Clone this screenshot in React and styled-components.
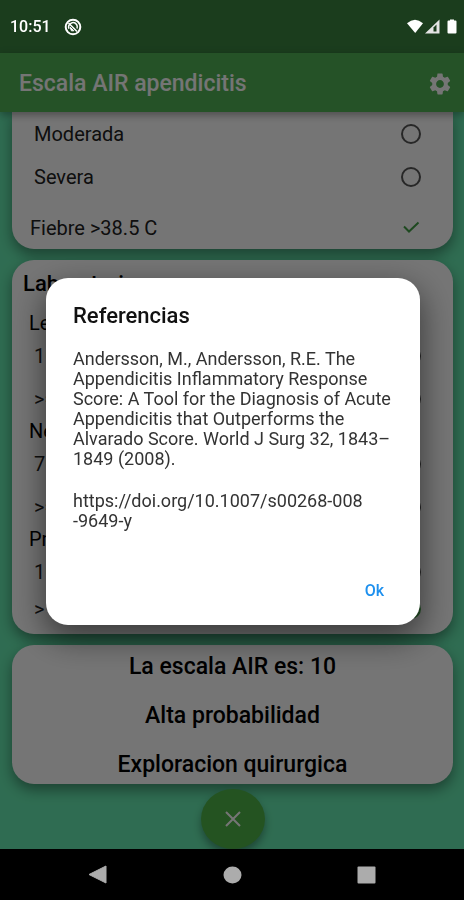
import React from "react";
import styled, { createGlobalStyle } from "styled-components";
import { MdSettings } from "react-icons/md";

const GlobalStyle = createGlobalStyle`
  * { box-sizing: border-box; }
  body { margin: 0; font-family: Roboto, "Liberation Sans", sans-serif; color: #000; }
  h1, h2, p, fieldset, legend { margin: 0; padding: 0; border: 0; }
  button { border: 0; padding: 0; background: none; font-family: inherit; }
`;

const Screen = styled.div`
  display: flex;
  flex-direction: column;
  height: 100vh;
  background: #67ecb2;
`;

const StatusBar = styled.div`
  display: flex;
  align-items: center;
  justify-content: space-between;
  height: 53px;
  flex-shrink: 0;
  padding: 0 7px 0 10px;
  background: #3b8540;
`;

const StatusGroup = styled.div`
  display: flex;
  align-items: center;
  gap: ${(p) => p.$gap}px;
  position: relative;
  z-index: 3;
  color: #fff;
  font-size: 16px;
  font-weight: 500;
  line-height: 20px;
`;

const AppBar = styled.header`
  display: flex;
  align-items: center;
  justify-content: space-between;
  height: 59px;
  flex-shrink: 0;
  padding: 2px 11px 0 19px;
  background: #52b355;
  color: #fff;
  box-shadow: 0 3px 8px rgba(0, 0, 0, 0.35);
  z-index: 1;
`;

const AppTitle = styled.h1`
  font-size: 23px;
  font-weight: 500;
  line-height: 28px;
`;

const IconButton = styled.button`
  display: flex;
  color: inherit;
`;

const Content = styled.main`
  flex: 1;
  min-height: 0;
  overflow: hidden;
  display: flex;
  flex-direction: column;
  padding: 0 11px 0 12px;
`;

const Card = styled.section`
  flex-shrink: 0;
  background: #fff;
  border-radius: ${(p) => (p.$continued ? "0 0 22px 22px" : "22px")};
  margin-bottom: ${(p) => (p.$last ? 5 : 11)}px;
  box-shadow: 0 6px 14px rgba(0, 0, 0, 0.4);
`;

const LabCard = styled(Card)`
  padding: 12px 0 9px;
`;

const ResultCard = styled(Card)`
  display: flex;
  flex-direction: column;
  gap: 25px;
  padding: 10px 12px 7px;
  text-align: center;
  font-size: 23px;
  font-weight: 500;
  line-height: 24px;
`;

const OptionRow = styled.label`
  display: flex;
  align-items: center;
  justify-content: space-between;
  height: ${(p) => (p.$compact ? 32 : 43)}px;
  margin-top: ${(p) => (p.$spaced ? 8 : 0)}px;
  padding: 0 32px 0 ${(p) => (p.$spaced ? 18 : 22)}px;
  color: #222;
  font-size: 20px;
`;

const Radio = styled.input.attrs({ type: "radio" })`
  appearance: none;
  width: 20px;
  height: 20px;
  margin: 0;
  border: 2px solid #555;
  border-radius: 50%;

  &:checked {
    border-color: #4caf50;
    background: radial-gradient(circle, #4caf50 50%, transparent 55%);
  }
`;

const CheckWrap = styled.span`
  display: flex;
  position: relative;
`;

const Checkbox = styled.input.attrs({ type: "checkbox" })`
  appearance: none;
  width: 20px;
  height: 20px;
  margin: 0;
`;

const CheckMark = styled.svg`
  position: absolute;
  inset: 0;
  display: none;
  pointer-events: none;

  ${Checkbox}:checked + & {
    display: block;
  }
`;

const CardHeading = styled.h2`
  padding-left: 11px;
  font-size: 22px;
  font-weight: 500;
  line-height: 24px;
  margin-bottom: 16px;
`;

const GroupLabel = styled.legend`
  padding-left: 17px;
  font-size: 20px;
  line-height: 22px;
`;

const Fab = styled.button`
  display: flex;
  align-items: center;
  justify-content: center;
  align-self: center;
  flex-shrink: 0;
  width: 64px;
  height: 60px;
  border-radius: 50%;
  background: #50b548;
  color: #fff;
  box-shadow: 0 5px 9px rgba(0, 0, 0, 0.35);
`;

const NavBar = styled.nav`
  position: relative;
  z-index: 3;
  display: flex;
  justify-content: center;
  gap: 115px;
  height: 51px;
  flex-shrink: 0;
  background: #000;
  color: #acacac;
`;

const Scrim = styled.div`
  position: fixed;
  inset: 0;
  z-index: 2;
  display: flex;
  align-items: center;
  justify-content: center;
  padding: 3px 44px 0 46px;
  background: rgba(0, 0, 0, 0.54);
`;

const Dialog = styled.div`
  display: flex;
  flex-direction: column;
  width: 100%;
  max-width: 560px;
  padding: 26px 27px 22px;
  border-radius: 22px;
  background: #fff;
  box-shadow: 0 12px 32px 2px rgba(0, 0, 0, 0.5);
`;

const DialogTitle = styled.h2`
  color: #111;
  font-size: 22px;
  font-weight: 500;
  line-height: 24px;
  margin-bottom: 21px;
`;

const Reference = styled.p`
  font-size: 18px;
  line-height: 20px;
  color: #333;
  margin-bottom: 22px;
  white-space: pre-line;
`;

const OkButton = styled.button`
  align-self: flex-end;
  margin: 26px 9px 0 0;
  color: #1e90ee;
  font-size: 16px;
  font-weight: 500;
  line-height: 24px;
`;

const labGroups = [
  { label: "Leucocitos", options: ["10.0-14.9", ">= 15.0"] },
  { label: "Neutrofilos", options: ["70-84%", ">= 85%"] },
  { label: "Proteina C", options: ["10-49 mg/L", "> 50 mg/L"], selected: 1 },
];

function LabGroup({ label, options, selected, last }) {
  return (
    <fieldset>
      <GroupLabel>{label}</GroupLabel>
      {options.map((option, i) => (
        <OptionRow key={option} $compact={last && i === options.length - 1}>
          {option}
          <Radio name={label} defaultChecked={selected === i} />
        </OptionRow>
      ))}
    </fieldset>
  );
}

export default function App() {
  const [open, setOpen] = React.useState(true);
  return (
    <Screen>
      <GlobalStyle />
      <StatusBar>
        <StatusGroup $gap={13}>
          <span>10:51</span>
          <svg width="18" height="18" viewBox="0 0 18 18" fill="none" stroke="#fff" aria-hidden="true">
            <circle cx="9" cy="9" r="7.3" strokeWidth="2" />
            <path d="M5 10.8a4.4 4.4 0 0 1 7.6-4.3q1.2 1.7.4 4" strokeWidth="1.5" />
            <path d="M4.5 5l8.5 8.5" strokeWidth="1.6" />
            <path d="M6.2 9.2l3.6 3.6H7.4z" fill="#fff" strokeWidth="1" />
          </svg>
        </StatusGroup>
        <StatusGroup $gap={0}>
          <svg width="50" height="16" viewBox="0 0 50 16" aria-hidden="true">
            <path d="M0 4.2Q8-2.8 16 4.2L8.2 14Z" fill="#fff" />
            <path d="M18 14.5L32.5.5v14Z" fill="#e4e4e4" />
            <path d="M26.5 12.5V8.5L29.5 5.5V12.5Z" fill="#1b3d1d" />
            <path d="M43 .5h4v1h1.5q1 0 1 1v11q0 1-1 1h-7q-1 0-1-1v-11q0-1 1-1H43Z" fill="#fff" />
          </svg>
        </StatusGroup>
      </StatusBar>
      <AppBar>
        <AppTitle>Escala AIR apendicitis</AppTitle>
        <IconButton aria-label="Ajustes">
          <MdSettings size={26} />
        </IconButton>
      </AppBar>
      <Content>
        <Card $continued>
          <OptionRow>
            Moderada
            <Radio name="rebote" />
          </OptionRow>
          <OptionRow>
            Severa
            <Radio name="rebote" />
          </OptionRow>
          <OptionRow $spaced>
            Fiebre &gt;38.5 C
            <CheckWrap>
              <Checkbox defaultChecked />
              <CheckMark width="20" height="20" viewBox="0 0 20 20" fill="none" stroke="#43a047" strokeWidth="2" aria-hidden="true">
                <path d="M3 8.5L8 13.5L17.5 4.5" />
              </CheckMark>
            </CheckWrap>
          </OptionRow>
        </Card>
        <LabCard>
          <CardHeading>Laboratorio</CardHeading>
          {labGroups.map((group, i) => (
            <LabGroup key={group.label} {...group} last={i === labGroups.length - 1} />
          ))}
        </LabCard>
        <ResultCard $last>
          <p>La escala AIR es: 10</p>
          <p>Alta probabilidad</p>
          <p>Exploracion quirurgica</p>
        </ResultCard>
        <Fab aria-label="Cerrar">
          <svg width="18" height="18" viewBox="0 0 18 18" stroke="currentColor" strokeWidth="2" aria-hidden="true">
            <path d="M2 2L16 16M16 2L2 16" />
          </svg>
        </Fab>
      </Content>
      <NavBar>
        <IconButton aria-label="Atrás">
          <svg width="19" height="51" viewBox="0 0 19 51" fill="currentColor" aria-hidden="true">
            <path d="M0 25.5L17 17v17Z" stroke="currentColor" strokeLinejoin="round" />
          </svg>
        </IconButton>
        <IconButton aria-label="Inicio">
          <svg width="19" height="51" viewBox="0 0 19 51" fill="currentColor" aria-hidden="true">
            <ellipse cx="9.5" cy="26" rx="9" ry="8.5" />
          </svg>
        </IconButton>
        <IconButton aria-label="Recientes">
          <svg width="19" height="51" viewBox="0 0 19 51" fill="currentColor" aria-hidden="true">
            <rect x="0.5" y="17.5" width="18" height="17" rx="1" />
          </svg>
        </IconButton>
      </NavBar>
      {open && (
        <Scrim>
          <Dialog role="dialog" aria-modal="true" aria-labelledby="dialog-title">
            <DialogTitle id="dialog-title">Referencias</DialogTitle>
            <Reference>
              Andersson, M., Andersson, R.E. The Appendicitis Inflammatory Response Score: A Tool for the Diagnosis of Acute Appendicitis that Outperforms the Alvarado Score. World J Surg 32, 1843–1849 (2008).
            </Reference>
            <Reference>{"https://doi.org/10.1007/s00268-008\n-9649-y"}</Reference>
            <OkButton onClick={() => setOpen(false)}>Ok</OkButton>
          </Dialog>
        </Scrim>
      )}
    </Screen>
  );
}
